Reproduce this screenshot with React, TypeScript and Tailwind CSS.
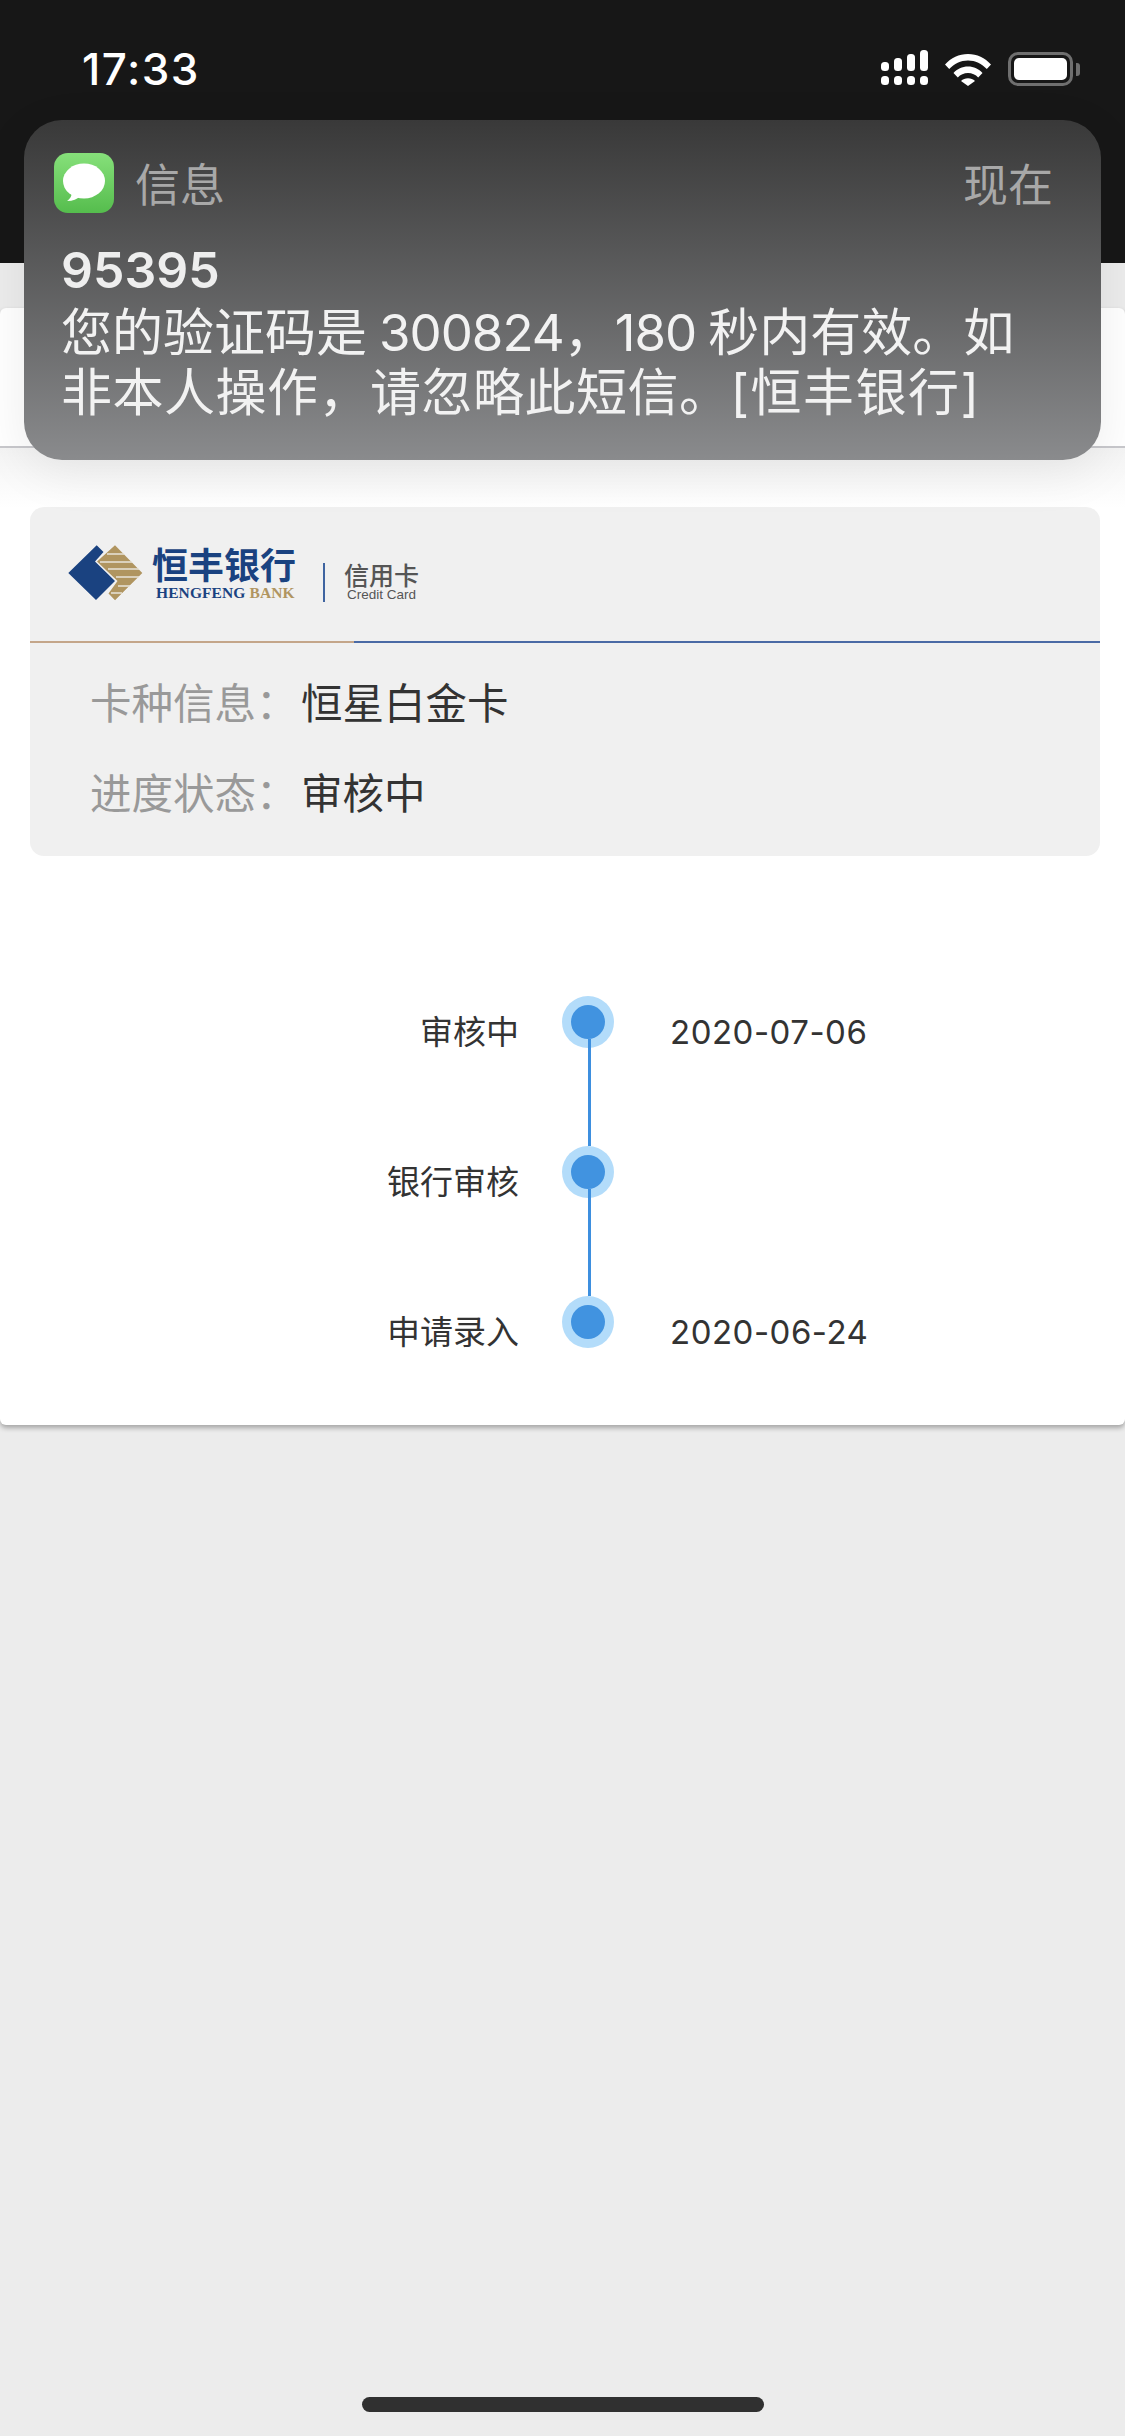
const cjk = 'font-["Inter","Noto_Sans_CJK_SC",sans-serif]';

const steps = [
  { label: '审核中', date: '2020-07-06' },
  { label: '银行审核', date: '' },
  { label: '申请录入', date: '2020-06-24' },
];

const SignalIcon = () => (
  <svg width="48" height="36" viewBox="0 0 48 36" fill="#fff">
    <rect x="0" y="12" width="8" height="9" rx="3.5" />
    <rect x="13" y="8" width="8" height="13" rx="3.5" />
    <rect x="26" y="4" width="8" height="17" rx="3.5" />
    <rect x="39" y="0" width="8" height="21" rx="3.5" />
    <rect x="0" y="26" width="8" height="9" rx="3.5" />
    <rect x="13" y="26" width="8" height="9" rx="3.5" />
    <rect x="26" y="26" width="8" height="9" rx="3.5" />
    <rect x="39" y="26" width="8" height="9" rx="3.5" />
  </svg>
);

const WifiIcon = () => (
  <svg width="46" height="33" viewBox="0 0 46 33" fill="#fff">
    <path d="M0 11.500C6 5 14 1 23 1s17 4 23 10.500l-4.200 4.500C36.800 10.800 30.300 7.500 23 7.500S9.200 10.800 4.200 16z" />
    <path d="M8.500 20C12 16 17.300 13.500 23 13.500S34 16 37.500 20l-4.300 4.500C30.600 21.700 27 20 23 20s-7.600 1.700-10.200 4.500z" />
    <path d="M16 28c1.800-1.800 4.300-2.800 7-2.800s5.200 1 7 2.800l-7 5z" />
  </svg>
);

const BatteryIcon = () => (
  <div className="flex items-center">
    <div className="w-[65px] h-[34px] rounded-[10px] border-[3px] border-[#6f6f6f] p-[3px]">
      <div className="w-full h-full rounded-[5px] bg-white" />
    </div>
    <div className="ml-[3px] w-[4px] h-[13px] rounded-r-[3px] bg-[#6f6f6f]" />
  </div>
);

const MessageIcon = () => (
  <div className="w-[60px] h-[60px] rounded-[14px] bg-gradient-to-b from-[#86e07a] to-[#55bd4d] flex items-center justify-center">
    <svg width="44" height="40" viewBox="0 0 44 40" fill="#fff">
      <ellipse cx="22" cy="18" rx="21" ry="17.500" />
      <path d="M10 28 C10 33 8 36 5 38 C11 38 15 36 19 33z" />
    </svg>
  </div>
);

const BankLogo = () => (
  <div className="flex items-start">
    <svg width="90" height="70" viewBox="0 0 90 70">
      <path d="M8.300 35 L36.700 7.300 L43.500 14 L35 23.500 L55 43 L36 62z" fill="#1a4280" />
      <path d="M55 7.300 L82.300 35 L55 62.300 L48.500 55.500 L57.500 43 L37 23.500z" fill="#b09560" />
      <g stroke="#e8e4da" strokeWidth="1.500">
        <path d="M47 16 H64" />
        <path d="M40 24 H72" />
        <path d="M48 31 H79" />
        <path d="M56 39 H79" />
        <path d="M58 48 H70" />
        <path d="M51 55 H62" />
      </g>
    </svg>
    <div className="ml-[2px] mt-[2px] flex flex-col">
      <span className='font-["Noto_Sans_CJK_SC",sans-serif] font-bold text-[36px] leading-[46px] text-[#1a4280]'>恒丰银行</span>
      <span className='font-["Liberation_Serif",serif] font-bold text-[15.5px] leading-[14px] tracking-[0.1px] ml-[4px] text-[#1a4280] whitespace-nowrap'>
        HENGFENG <span className="text-[#b09560]">BANK</span>
      </span>
    </div>
    <div className="ml-[27px] mt-[25px] w-[2px] h-[39px] bg-[#3f64a0]" />
    <div className="ml-[19px] mt-[21px] flex flex-col">
      <span className='font-["Noto_Sans_CJK_SC",sans-serif] font-medium text-[25px] leading-[30px] text-[#555]'>信用卡</span>
      <span className='font-["Liberation_Sans",sans-serif] text-[13.5px] leading-[12px] ml-[3px] text-[#555] whitespace-nowrap'>Credit Card</span>
    </div>
  </div>
);

export default function App() {
  return (
    <div className={`relative h-[2436px] w-[1125px] overflow-hidden bg-[#ececec] flex flex-col ${cjk}`}>
      <div className="h-[263px] shrink-0 bg-[#171717] flex items-start justify-between pl-[82px] pr-[45px] pt-[46px]">
        <span className='font-["Inter",sans-serif] font-medium text-[44px] leading-[46px] text-white tracking-[1.5px]'>17:33</span>
        <div className="flex items-start pt-[4px]">
          <SignalIcon />
          <div className="ml-[16px] mt-[3px]"><WifiIcon /></div>
          <div className="ml-[17px] mt-[2px]"><BatteryIcon /></div>
        </div>
      </div>

      <div className="mt-[45px] h-[1117px] shrink-0 bg-white rounded-[6px] shadow-[0_3px_5px_rgba(0,0,0,0.3)] flex flex-col">
        <div className="h-[140px] shrink-0 border-b-2 border-[#c8c8cc]" />
        <div className="pt-[59px] pl-[30px] pr-[25px] bg-gradient-to-b from-[#f4f4f4] to-white to-[60px]">
          <div className="h-[349px] rounded-[14px] bg-[#f0f0f0] overflow-hidden">
            <div className="h-[134px] pl-[30px] pt-[31px]">
              <BankLogo />
            </div>
            <div className="flex h-[2px]">
              <div className="w-[324px] bg-[#c4a68a]" />
              <div className="flex-1 bg-[#4a6aa5]" />
            </div>
            <div className="pl-[60px] pt-[36px] flex flex-col gap-[40px]">
              <div className="flex items-center h-[50px] text-[41.5px]">
                <span className="w-[211px] text-[#999999]">卡种信息：</span>
                <span className="text-[#333333]">恒星白金卡</span>
              </div>
              <div className="flex items-center h-[50px] text-[41.5px]">
                <span className="w-[211px] text-[#999999]">进度状态：</span>
                <span className="text-[#333333]">审核中</span>
              </div>
            </div>
          </div>
        </div>

        <div className="pt-[140px] flex flex-col">
          {steps.map((step, i) => (
            <div key={step.label} className="flex items-start h-[150px] last:h-[127px]">
              <div className="w-[519px] mt-[16px] text-right text-[33px] leading-[40px] text-[#333333]">{step.label}</div>
              <div className="relative ml-[43px] w-[52px] h-[52px] rounded-full bg-[#b3dcfa] flex items-center justify-center">
                <div className="w-[34px] h-[34px] rounded-full bg-[#4193e0]" />
                {i < steps.length - 1 && (
                  <div className="absolute left-[26px] top-[43px] w-[3px] h-[107px] bg-[#3d8fdf]" />
                )}
              </div>
              <div className="ml-[56px] mt-[16px] text-[33px] leading-[40px] tracking-[0.5px] text-[#333333]">{step.date}</div>
            </div>
          ))}
        </div>
      </div>

      {/* notification banner sits over the page */}
      <div className="absolute left-[24px] top-[120px] w-[1077px] h-[340px] rounded-[38px] bg-gradient-to-b from-[#393939] to-[#8a8b8d] shadow-[0_12px_50px_rgba(0,0,0,0.08)] pl-[30px] pr-[48px] pt-[33px]">
        <div className="flex items-center justify-between h-[60px]">
          <div className="flex items-center">
            <MessageIcon />
            <span className="ml-[21px] mt-[6px] text-[45px] text-[#a8a8a8]">信息</span>
          </div>
          <span className="mt-[6px] text-[45px] text-[#a8a8a8]">现在</span>
        </div>
        <div className="pl-[7px] pt-[27px]">
          <div className="mb-[3px] font-semibold text-[50px] leading-[60px] text-[#eeeeee]">95395</div>
          <div className="text-[51px] leading-[60px] text-[#f2f2f2] whitespace-nowrap">
            您的验证码是<span className="ml-[12px] tracking-[-1px]">300824</span>，<span className="mr-[12px] tracking-[-1px]">180</span>秒内有效。如
          </div>
          <div className="text-[51px] leading-[60px] tracking-[0.5px] text-[#f2f2f2] whitespace-nowrap">
            非本人操作，请忽略此短信。<span className="tracking-[1.5px]">[恒丰银行]</span>
          </div>
        </div>
      </div>

      <div className="mt-auto mb-[24px] mx-auto w-[402px] h-[15px] rounded-full bg-[#303030]" />
    </div>
  );
}
